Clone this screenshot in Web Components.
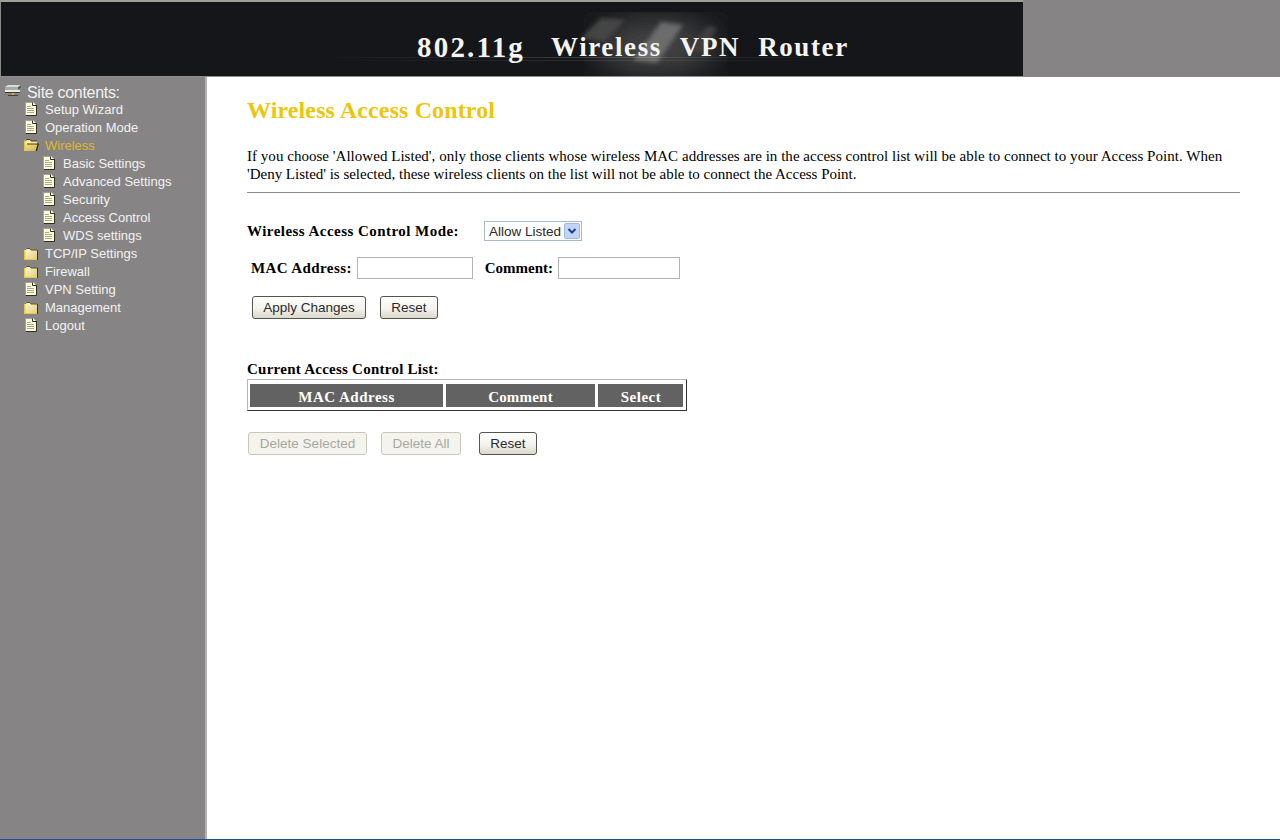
<!DOCTYPE html>
<html>
<head>
<meta charset="utf-8">
<title>Wireless Access Control</title>
<style>
  html, body { margin: 0; height: 100%; background: #fff; overflow: hidden; }
  router-admin { height: 840px; }
</style>
</head>
<body>
<router-admin>
  <router-banner slot="top"></router-banner>
  <site-menu slot="side" heading="Site contents:">
    <menu-item icon="page">Setup Wizard</menu-item>
    <menu-item icon="page">Operation Mode</menu-item>
    <menu-item icon="open" active>Wireless</menu-item>
    <menu-item icon="page" sub>Basic Settings</menu-item>
    <menu-item icon="page" sub>Advanced Settings</menu-item>
    <menu-item icon="page" sub>Security</menu-item>
    <menu-item icon="page" sub>Access Control</menu-item>
    <menu-item icon="page" sub>WDS settings</menu-item>
    <menu-item icon="folder">TCP/IP Settings</menu-item>
    <menu-item icon="folder">Firewall</menu-item>
    <menu-item icon="page">VPN Setting</menu-item>
    <menu-item icon="folder">Management</menu-item>
    <menu-item icon="page">Logout</menu-item>
  </site-menu>
  <access-control slot="main"></access-control>
</router-admin>

<script>
class RouterAdmin extends HTMLElement {
  constructor() {
    super();
    this.attachShadow({ mode: "open" });
    this.shadowRoot.innerHTML = /* html */`
    <style>
      :host {
        display: grid;
        grid-template-rows: 77px 1fr 1px;
        grid-template-columns: 205px 2px 1fr;
      }
      .top { grid-column: 1 / 4; }
      .edge { background: #b4b2b2; }
      .foot { grid-column: 1 / 4; background: #1f5190; }
    </style>
    <div class="top"><slot name="top"></slot></div>
    <slot name="side"></slot>
    <div class="edge"></div>
    <slot name="main"></slot>
    <div class="foot"></div>`;
  }
}

class RouterBanner extends HTMLElement {
  constructor() {
    super();
    this.attachShadow({ mode: "open" });
    this.shadowRoot.innerHTML = /* html */`
    <style>
      :host {
        display: flex;
        height: 77px;
        background: #868484;
      }
      .strip {
        position: relative;
        box-sizing: border-box;
        width: 1023px;
        height: 77px;
        padding: 28px 0 0 416px;
        border-top: 2px solid #a19f9a;
        border-left: 1px solid #8a8a88;
        border-bottom: 1px solid #8e8e8c;
        background: #15161a;
        color: #f4f4f0;
        font: bold 27px/34px "Liberation Serif", serif;
        letter-spacing: 1.6px;
        white-space: nowrap;
      }
      svg { position: absolute; left: 0; top: 0; }
      .title { position: relative; display: flex; }
      .model { font-size: 29px; letter-spacing: 2.2px; margin-right: 26px; }
      .word { margin-right: 18px; }
    </style>
    <div class="strip">
      <svg width="1022" height="74" viewBox="0 0 1022 74">
        <defs>
          <filter id="b1"><feGaussianBlur stdDeviation="16"/></filter>
          <filter id="b2"><feGaussianBlur stdDeviation="2"/></filter>
          <linearGradient id="ln">
            <stop offset="0" stop-color="#fff" stop-opacity="0"/>
            <stop offset=".5" stop-color="#fff" stop-opacity=".16"/>
            <stop offset="1" stop-color="#fff" stop-opacity="0"/>
          </linearGradient>
        </defs>
        <ellipse cx="655" cy="44" rx="60" ry="28" fill="#444" filter="url(#b1)"/>
        <path d="M580 36l20-20 24 2-20 22z" fill="#454545" filter="url(#b2)"/>
        <path d="M632 58l28-38 22 3-26 38z" fill="#6c6c6c" filter="url(#b2)"/>
        <path d="M690 48l16-24 10 2-14 24z" fill="#404040" filter="url(#b2)"/>
        <rect x="320" y="55" width="520" height="1" fill="url(#ln)"/>
        <rect x="320" y="58" width="520" height="1" fill="url(#ln)" opacity=".6"/>
      </svg>
      <div class="title">
        <span class="model">802.11g</span>
        <span class="word">Wireless</span>
        <span class="word">VPN</span>
        <span>Router</span>
      </div>
    </div>`;
  }
}

class SiteMenu extends HTMLElement {
  constructor() {
    super();
    this.attachShadow({ mode: "open" });
    this.shadowRoot.innerHTML = /* html */`
    <style>
      :host {
        display: block;
        background: #868484;
        padding: 7px 0 0 5px;
        color: #f2f2f2;
        font-family: "Liberation Sans", sans-serif;
      }
      .head {
        display: flex;
        align-items: center;
        gap: 6px;
        height: 16px;
        font-size: 16px;
        letter-spacing: -.3px;
        white-space: nowrap;
      }
      .head span { padding-top: 2px; }
      svg { display: block; margin-top: -4px; }
    </style>
    <div class="head">
      <svg width="16" height="13" viewBox="0 0 16 13">
        <path d="M3 1h13v3l-3 2H0V3z" fill="#d8dcd8"/>
        <path d="M0 3h13v3H0z" fill="#a8aca8"/>
        <path d="M13 3l3-2v3l-3 2z" fill="#5a5e5a"/>
        <path d="M0 6h15v2H0z" fill="#e8ece8"/>
        <path d="M0 8h15v1H0z" fill="#3a3a3a"/>
        <path d="M7 9h2v2H7z" fill="#e0b020"/>
        <path d="M3 11h10v1H3z" fill="#403c30"/>
      </svg>
      <span>${this.getAttribute("heading")}</span>
    </div>
    <slot></slot>`;
  }
}

const MENU_ICONS = {
  page: /* html */`
    <svg width="12" height="14" viewBox="0 0 12 14">
      <path d="M0 0h8l3 3v10H0z" fill="#fdfbdc"/>
      <path d="M0 .5h8M.5 0v13" stroke="#a5a488" stroke-width="1" fill="none"/>
      <path d="M7.5 .5v3h3.5" fill="#fff" stroke="#2e2e22" stroke-width="1"/>
      <path d="M11.5 3v10.5H1" fill="none" stroke="#2e2e22" stroke-width="1"/>
      <path d="M2 4.5h4M2 6.5h7M2 8.5h7M2 10.5h7" stroke="#a8a88c" stroke-width="1"/>
    </svg>`,
  folder: /* html */`
    <svg width="14" height="13" viewBox="0 0 14 13">
      <defs><linearGradient id="f" x2="1" y2="1"><stop offset="0" stop-color="#fffbd0"/><stop offset="1" stop-color="#e0cc88"/></linearGradient></defs>
      <path d="M1 3l1-2h4l1 2h6v9H1z" fill="url(#f)"/>
      <path d="M1.5 3l1-1.5h3.5l1 1.5h6" fill="none" stroke="#5c5428" stroke-width="1"/>
      <path d="M0 3h1.4v9H0z" fill="#e6cc3a"/>
      <path d="M0 12h14v1H0z" fill="#e6cc3a"/>
      <path d="M13 3h1v10h-1z" fill="#3a3418"/>
    </svg>`,
  open: /* html */`
    <svg width="15" height="12" viewBox="0 0 15 12">
      <defs><linearGradient id="o" x2="1" y2="1"><stop offset="0" stop-color="#f4e48a"/><stop offset="1" stop-color="#cdb050"/></linearGradient></defs>
      <path d="M1 2l1-2h4l1 2h6v3H1z" fill="#f8ecaa"/>
      <path d="M1.5 2l1-1.5h3.5l1 1.5h6" fill="none" stroke="#3c3616" stroke-width="1"/>
      <path d="M0 5h15l-2 7H0z" fill="url(#o)"/>
      <path d="M0 1.5h1.4v10.5H0z" fill="#e6cc3a"/>
      <path d="M3 5h12" stroke="#3c3616" stroke-width="1"/>
      <path d="M15 5l-2 7h-1.4l2-7z" fill="#24200c"/>
    </svg>`
};

class MenuItem extends HTMLElement {
  constructor() {
    super();
    this.attachShadow({ mode: "open" });
    const icon = this.getAttribute("icon") || "page";
    this.shadowRoot.innerHTML = /* html */`
    <style>
      :host {
        display: flex;
        align-items: center;
        height: 18px;
        padding-left: 18px;
        font-size: 13px;
        white-space: nowrap;
      }
      :host([sub]) { padding-left: 36px; }
      :host([active]) { color: #e0b82a; }
      .ico {
        width: 22px;
        height: 16px;
        flex: none;
        display: flex;
        align-items: center;
        box-sizing: border-box;
        padding-left: 2px;
      }
      :host([icon="folder"]) .ico, :host([icon="open"]) .ico { padding-left: 1px; }
    </style>
    <span class="ico">${MENU_ICONS[icon]}</span><slot></slot>`;
  }
}

class OldButton extends HTMLElement {
  constructor() {
    super();
    this.attachShadow({ mode: "open" });
    this.shadowRoot.innerHTML = /* html */`
    <style>
      :host { display: block; }
      button {
        display: block;
        box-sizing: border-box;
        width: 100%;
        height: 23px;
        padding: 0 0 1px;
        border: 1px solid #55554e;
        border-radius: 3px;
        background: linear-gradient(180deg, #fff 0%, #f4f3ee 55%, #dcd8cc 100%);
        color: #2a2a2a;
        font: 13.5px "Liberation Sans", sans-serif;
      }
      :host([disabled]) button {
        border-color: #c9c7ba;
        background: #f4f3ee;
        color: #a8a89e;
      }
    </style>
    <button ${this.hasAttribute("disabled") ? "disabled" : ""}><slot></slot></button>`;
  }
}

class AccessControl extends HTMLElement {
  constructor() {
    super();
    this.attachShadow({ mode: "open" });
    this.shadowRoot.innerHTML = /* html */`
    <style>
      :host {
        display: block;
        background: #fff;
        padding: 19px 40px 0 40px;
        color: #000;
        font: 15px/18px "Liberation Serif", serif;
      }
      h1 {
        margin: 0 0 23px;
        color: #eec50d;
        font-size: 24px;
        line-height: 28px;
        letter-spacing: .12px;
      }
      p { margin: 0; letter-spacing: .03px; }
      p span { letter-spacing: -.015px; }
      hr {
        height: 1px;
        margin: 9px 0 0;
        border: 0;
        background: #8c8c8c;
      }
      .row { display: flex; align-items: center; white-space: nowrap; }
      b { letter-spacing: .4px; }
      .mode { height: 20px; margin-top: 28px; }
      .mode b { width: 237px; letter-spacing: .46px; }
      .select {
        box-sizing: border-box;
        display: flex;
        align-items: center;
        justify-content: space-between;
        width: 98px;
        height: 20px;
        padding: 0 1px 0 4px;
        border: 1px solid #a9bad0;
        font: 13.5px "Liberation Sans", sans-serif;
        color: #2a2a2a;
      }
      .arrow { display: block; }
      .macs { height: 22px; margin-top: 16px; padding-left: 4px; }
      .macs b + input + b { letter-spacing: 0; }
      input {
        box-sizing: border-box;
        height: 22px;
        margin: 0;
        padding: 0;
        border: 1px solid #b4b4b4;
        background: #fff;
      }
      .mac { width: 116px; margin: 0 12px 0 5px; }
      .note { width: 122px; margin-left: 5px; }
      .btns { display: flex; margin-top: 17px; padding-left: 5px; }
      .apply { width: 114px; margin-right: 14px; }
      .reset { width: 58px; }
      .list { margin-top: 41px; line-height: 18px; }
      .list b { letter-spacing: .25px; }
      .grid {
        box-sizing: border-box;
        display: grid;
        grid-template-columns: 193px 149px 85px;
        grid-template-rows: 23px;
        gap: 3px;
        width: 440px;
        height: 32px;
        margin-top: 1px;
        padding: 4px 3px 3px 2px;
        border: 1px solid;
        border-color: #b8b8b8 #333 #333 #b8b8b8;
      }
      .grid div {
        background: #626262;
        color: #fff;
        font-weight: bold;
        line-height: 26px;
        font-size: 15px;
        text-align: center;
        letter-spacing: .5px;
      }
      .grid .tight { letter-spacing: .2px; }
      .grid .sel { padding-left: 1px; }
      .btns2 { display: flex; margin-top: 21px; padding-left: 1px; }
      .del { width: 119px; margin-right: 14px; }
      .all { width: 80px; margin-right: 18px; }
    </style>
    <h1>Wireless Access Control</h1>
    <p>If you choose 'Allowed Listed', only those clients whose wireless MAC addresses are in the access control list will be able to connect to your Access Point. When <span>'Deny Listed' is selected, these wireless clients on the list will not be able to connect the Access Point.</span></p>
    <hr>
    <div class="row mode">
      <b>Wireless Access Control Mode:</b>
      <div class="select">Allow Listed
        <svg class="arrow" width="16" height="16" viewBox="0 0 16 16">
          <rect x=".5" y=".5" width="15" height="15" rx="1.5" fill="#c3d5f6" stroke="#9db8e8"/>
          <path d="M4.5 6l3.5 3.5L11.5 6" fill="none" stroke="#1f3f86" stroke-width="2"/>
        </svg>
      </div>
    </div>
    <div class="row macs">
      <b>MAC Address:</b><input class="mac" type="text">
      <b>Comment:</b><input class="note" type="text">
    </div>
    <div class="btns">
      <old-button class="apply">Apply Changes</old-button>
      <old-button class="reset">Reset</old-button>
    </div>
    <div class="list"><b>Current Access Control List:</b></div>
    <div class="grid">
      <div>MAC Address</div><div class="tight">Comment</div><div class="sel">Select</div>
    </div>
    <div class="btns2">
      <old-button class="del" disabled>Delete Selected</old-button>
      <old-button class="all" disabled>Delete All</old-button>
      <old-button class="reset">Reset</old-button>
    </div>`;
  }
}

customElements.define("router-admin", RouterAdmin);
customElements.define("router-banner", RouterBanner);
customElements.define("site-menu", SiteMenu);
customElements.define("menu-item", MenuItem);
customElements.define("old-button", OldButton);
customElements.define("access-control", AccessControl);
</script>
</body>
</html>
